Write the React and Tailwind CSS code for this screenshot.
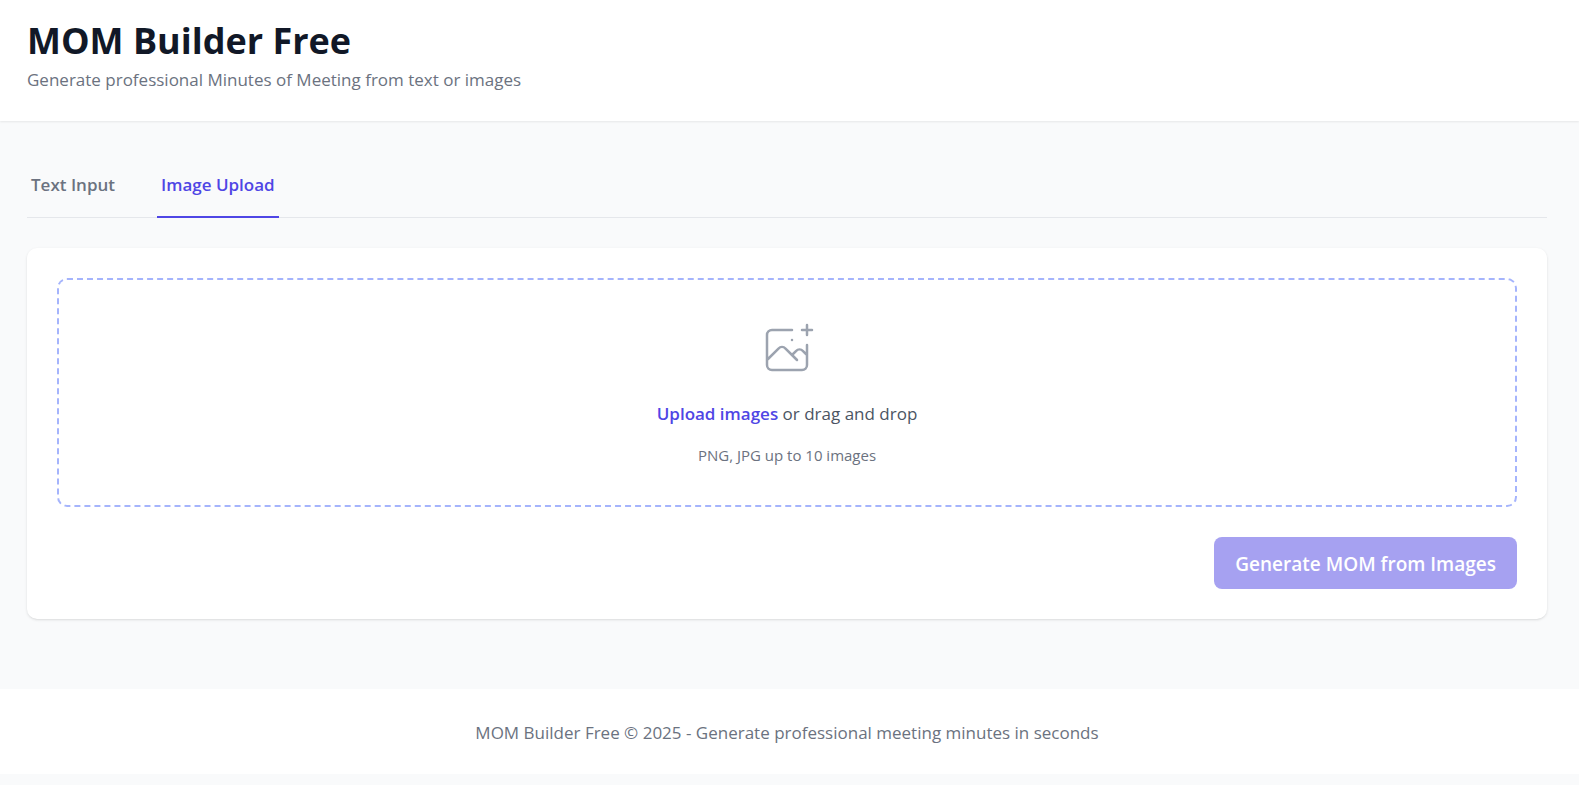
import { useState } from "react";

const tabs = [
  { id: "text", label: "Text Input" },
  { id: "image", label: "Image Upload" },
];

function Header() {
  return (
    <header className="bg-white pt-[21px] pr-8 pb-[27px] pl-[27px] shadow-[0_1px_2px_0_rgba(0,0,0,0.08)]">
      <h1 className="text-[36px] leading-10 font-bold text-[#111827]">MOM Builder Free</h1>
      <p className="mt-[5px] text-[17px] leading-7 text-[#6b7280]">
        Generate professional Minutes of Meeting from text or images
      </p>
    </header>
  );
}

function Tabs({ active, onChange }) {
  return (
    <nav className="flex gap-[38px] border-b border-[#e5e7eb]" aria-label="Input type">
      {tabs.map((tab) => (
        <button
          key={tab.id}
          type="button"
          onClick={() => onChange(tab.id)}
          className={
            active === tab.id
              ? "-mb-px border-b-2 border-[#4f46e5] px-1 pt-[21px] pb-[17px] text-[17px] leading-7 font-semibold text-[#4f46e5]"
              : "-mb-px border-b-2 border-transparent px-1 pt-[21px] pb-[17px] text-[17px] leading-7 font-semibold text-[#6b7280]"
          }
        >
          {tab.label}
        </button>
      ))}
    </nav>
  );
}

function ImagePlusIcon() {
  return (
    <svg
      className="size-[60px] text-[#9ca3af]"
      viewBox="0 0 48 48"
      fill="none"
      stroke="currentColor"
      strokeWidth="2"
      strokeLinecap="round"
      strokeLinejoin="round"
      aria-hidden="true"
    >
      <path d="M28 8H12a4 4 0 00-4 4v20m32-12v8m0 0v8a4 4 0 01-4 4H12a4 4 0 01-4-4v-4m32-4l-3.172-3.172a4 4 0 00-5.656 0L28 28M8 32l9.172-9.172a4 4 0 015.656 0L28 28m0 0l4 4m4-24h8m-4-4v8m-12 4h.02" />
    </svg>
  );
}

function UploadCard() {
  return (
    <section className="rounded-[10px] bg-white p-[30px] shadow-sm">
      <div className="flex flex-col items-center rounded-[10px] border-2 border-dashed border-[#a5b4fc] pt-10 pb-9">
        <ImagePlusIcon />
        <p className="mt-5 text-[17px] leading-7 text-[#4b5563]">
          <label htmlFor="images" className="cursor-pointer font-semibold text-[#4f46e5]">
            Upload images
          </label>{" "}
          or drag and drop
        </p>
        <input id="images" type="file" accept="image/png,image/jpeg" multiple className="sr-only" />
        <p className="mt-[15px] mb-px text-[15px] leading-[25px] text-[#6b7280]">
          PNG, JPG up to 10 images
        </p>
      </div>
      <div className="mt-[30px] flex justify-end">
        <button
          type="button"
          disabled
          className="rounded-lg bg-[#4f46e5] px-[21px] pt-[13px] pb-[11px] text-[19px] leading-7 font-semibold text-white opacity-50"
        >
          Generate MOM from Images
        </button>
      </div>
    </section>
  );
}

export default function App() {
  const [active, setActive] = useState("image");
  return (
    <div className="min-h-screen bg-[#f9fafb] font-['Open_Sans','Noto_Sans',sans-serif]">
      <Header />
      <main className="flex flex-col gap-[30px] pt-[29px] pr-8 pb-[70px] pl-[27px]">
        <Tabs active={active} onChange={setActive} />
        <UploadCard />
      </main>
      <footer className="bg-white pt-[29px] pr-8 pb-[27px] pl-[27px]">
        <p className="text-center text-[17px] leading-[29px] text-[#6b7280]">
          MOM Builder Free © 2025 - Generate professional meeting minutes in seconds
        </p>
      </footer>
    </div>
  );
}
